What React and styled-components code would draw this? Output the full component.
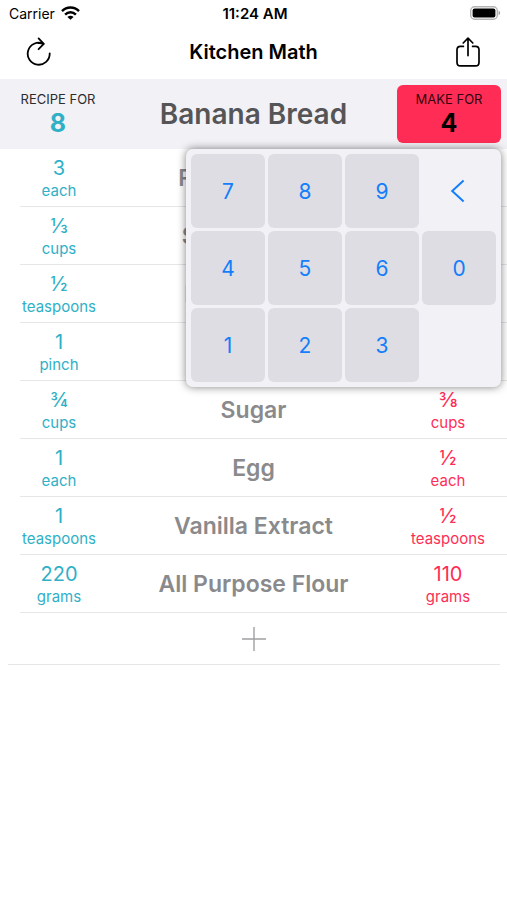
import React, { useState } from 'react'
import styled, { createGlobalStyle } from 'styled-components'

const TEAL = '#30b0c7'
const PINK = '#ff2d55'

const GlobalStyle = createGlobalStyle`
  * {
    box-sizing: border-box;
  }

  body {
    margin: 0;
    background-color: white;
    color: black;
    font-family: Inter, 'Liberation Sans', sans-serif;
  }

  button {
    margin: 0;
    padding: 0;
    border: none;
    background: none;
    color: inherit;
    font: inherit;
    cursor: pointer;
  }
`

const StatusBar = styled.div`
  display: grid;
  grid-template-columns: 1fr auto 1fr;
  align-items: center;
  height: 26px;
  padding: 0 6px 0 9px;
  font-size: 14px;
`

const Carrier = styled.div`
  display: flex;
  align-items: center;
  gap: 6px;
`

const Clock = styled.div`
  font-size: 15px;
  font-weight: 600;
`

const Battery = styled.div`
  display: flex;
  justify-content: flex-end;
`

const NavBar = styled.header`
  display: flex;
  align-items: center;
  justify-content: space-between;
  height: 53px;
  padding: 0 20px 2px;
`

const Title = styled.h1`
  margin: 0;
  font-size: 20px;
  font-weight: 600;
`

const IconButton = styled.button`
  display: flex;
  align-items: center;
  justify-content: center;
  width: 38px;
  height: 38px;
`

const Recipe = styled.table`
  display: block;
`

const RecipeHead = styled.thead`
  display: block;
  background-color: #f1f1f6;
`

const HeadRow = styled.tr`
  display: grid;
  grid-template-columns: 104px 1fr 104px;
  align-items: center;
  height: 70px;
  padding: 0 6px;
`

const HeadCell = styled.th`
  position: relative;
  padding: 0;
  font-weight: 400;
`

const RecipeName = styled.th`
  padding: 0;
  color: #555557;
  font-size: 28px;
  font-weight: 600;
  text-align: center;
`

const Servings = styled.button`
  display: flex;
  flex-direction: column;
  align-items: center;
  width: 100%;
  height: 58px;
  padding-top: 4px;
  border-radius: 6px;
  background-color: ${props => props.$active ? PINK : 'transparent'};
`

const ServingsLabel = styled.span`
  font-size: 13px;
  line-height: 20px;
  white-space: nowrap;
  color: ${props => props.$active ? '#33060f' : '#2c2c2e'};
`

const ServingsCount = styled.span`
  font-size: 25px;
  font-weight: 700;
  line-height: 28px;
  color: ${props => props.$active ? 'black' : TEAL};
`

const RecipeBody = styled.tbody`
  display: block;
`

const Row = styled.tr`
  display: grid;
  grid-template-columns: 78px 1fr 78px;
  height: 58px;
  margin-left: 20px;
  padding-right: 20px;
  border-bottom: 1px solid #e6e6e8;
`

const Amount = styled.td`
  display: flex;
  flex-direction: column;
  align-items: center;
  padding: 7px 0 0;
  color: ${props => props.$scaled ? PINK : TEAL};
`

const Quantity = styled.span`
  font-size: 20px;
  line-height: 24px;
`

const Unit = styled.span`
  font-size: 15px;
  line-height: 21px;
`

const Ingredient = styled.td`
  display: flex;
  align-items: center;
  justify-content: center;
  padding: 0;
  color: #8a8a8d;
  font-size: 23px;
  font-weight: 600;
  white-space: nowrap;
`

const AddButton = styled.button`
  display: flex;
  align-items: center;
  justify-content: center;
  width: calc(100% - 15px);
  height: 52px;
  margin: 0 7px 0 8px;
  border-bottom: 1px solid #e6e6e8;
`

const Keypad = styled.div`
  position: absolute;
  z-index: 1;
  top: calc(100% + 6px);
  right: 0;
  display: grid;
  grid-template-columns: repeat(4, 74px);
  grid-auto-rows: 74px;
  gap: 3px;
  padding: 5px;
  border-radius: 7px;
  background-color: #f1f1f6;
  box-shadow: 0 0 8px rgba(0, 0, 0, 0.5);
`

const Key = styled.button`
  display: flex;
  align-items: center;
  justify-content: center;
  border-radius: 6px;
  background-color: ${props => props.$plain ? 'transparent' : '#dddde3'};
  color: #147efb;
  font-size: 21px;
`

const ingredients = [
  { name: 'Ripe Bananas', qty: '3', unit: 'each', scaled: '1½' },
  { name: 'Salted Butter', qty: '⅓', unit: 'cups', scaled: '⅙' },
  { name: 'Baking Soda', qty: '½', unit: 'teaspoons', scaled: '¼' },
  { name: 'Salt', qty: '1', unit: 'pinch', scaled: '½' },
  { name: 'Sugar', qty: '¾', unit: 'cups', scaled: '⅜' },
  { name: 'Egg', qty: '1', unit: 'each', scaled: '½' },
  { name: 'Vanilla Extract', qty: '1', unit: 'teaspoons', scaled: '½' },
  { name: 'All Purpose Flour', qty: '220', unit: 'grams', scaled: '110' },
]

const keys = ['7', '8', '9', 'back', '4', '5', '6', '0', '1', '2', '3']

function WifiIcon() {
  return (
    <svg width="19" height="14" viewBox="0 0 19 14" fill="none" stroke="black" strokeWidth="2.5">
      <path d="M1 5.2C5.8 0.4 13.2 0.4 18 5.2" />
      <path d="M4.1 8.6C7.2 5.6 11.8 5.6 14.9 8.6" />
      <path d="M9.5 13.8L6.4 10.9C8.1 9.3 10.9 9.3 12.6 10.9Z" fill="black" stroke="none" />
    </svg>
  )
}

function BatteryIcon() {
  return (
    <svg width="31" height="14" viewBox="0 0 31 14">
      <rect x="0.7" y="0.7" width="26.6" height="12.6" rx="4" fill="white" stroke="#b4b4b4" strokeWidth="1.4" />
      <rect x="2.6" y="2.5" width="22.8" height="9" rx="2" fill="black" />
      <path d="M28.6 4.8C30.6 5.5 30.6 8.5 28.6 9.2Z" fill="#a0a0a0" />
    </svg>
  )
}

function ReloadIcon() {
  return (
    <svg width="26" height="30" viewBox="0 0 26 30" fill="none" stroke="black" strokeWidth="1.8" strokeLinecap="round" strokeLinejoin="round">
      <path d="M23.7 16.4A11 11 0 1 1 17.4 6.8C15.6 6.2 14 6 12.6 6.1" />
      <path d="M12.6 1.4L17.8 6.8L12.6 12.2" />
    </svg>
  )
}

function ShareIcon() {
  return (
    <svg width="26" height="30" viewBox="0 0 26 30" fill="none" stroke="black" strokeWidth="1.7" strokeLinecap="round" strokeLinejoin="round">
      <path d="M8.4 9.4H5.4Q2 9.4 2 12.8V25.4Q2 28.8 5.4 28.8H20.6Q24 28.8 24 25.4V12.8Q24 9.4 20.6 9.4H17.6" />
      <path d="M13 18.6V1.4M8.2 6L13 1.2L17.8 6" />
    </svg>
  )
}

export default function App() {
  const [editing, setEditing] = useState(true)

  return (
    <>
      <GlobalStyle />
      <StatusBar>
        <Carrier>
          Carrier
          <WifiIcon />
        </Carrier>
        <Clock>11:24 AM</Clock>
        <Battery>
          <BatteryIcon />
        </Battery>
      </StatusBar>
      <NavBar>
        <IconButton aria-label="Reset"><ReloadIcon /></IconButton>
        <Title>Kitchen Math</Title>
        <IconButton aria-label="Share"><ShareIcon /></IconButton>
      </NavBar>
      <main>
        <Recipe>
          <RecipeHead>
            <HeadRow>
              <HeadCell>
                <Servings>
                  <ServingsLabel>RECIPE FOR</ServingsLabel>
                  <ServingsCount>8</ServingsCount>
                </Servings>
              </HeadCell>
              <RecipeName>Banana Bread</RecipeName>
              <HeadCell>
                <Servings $active={editing} onClick={() => setEditing(!editing)}>
                  <ServingsLabel $active={editing}>MAKE FOR</ServingsLabel>
                  <ServingsCount $active={editing}>4</ServingsCount>
                </Servings>
                {editing && (
                  <Keypad>
                    {keys.map(key => key === 'back' ? (
                      <Key key={key} $plain aria-label="Delete">
                        <svg width="18" height="24" viewBox="0 0 18 24" fill="none" stroke="currentColor" strokeWidth="2">
                          <path d="M13.6 1.4L2.2 12L13.6 22.6" />
                        </svg>
                      </Key>
                    ) : (
                      <Key key={key}>{key}</Key>
                    ))}
                  </Keypad>
                )}
              </HeadCell>
            </HeadRow>
          </RecipeHead>
          <RecipeBody>
            {ingredients.map(item => (
              <Row key={item.name}>
                <Amount>
                  <Quantity>{item.qty}</Quantity>
                  <Unit>{item.unit}</Unit>
                </Amount>
                <Ingredient>{item.name}</Ingredient>
                <Amount $scaled>
                  <Quantity>{item.scaled}</Quantity>
                  <Unit>{item.unit}</Unit>
                </Amount>
              </Row>
            ))}
          </RecipeBody>
        </Recipe>
        <AddButton aria-label="Add ingredient">
          <svg width="24" height="24" viewBox="0 0 24 24" stroke="#a0a0a3" strokeWidth="1.4">
            <path d="M12 0V24M0 12H24" />
          </svg>
        </AddButton>
      </main>
    </>
  )
}
